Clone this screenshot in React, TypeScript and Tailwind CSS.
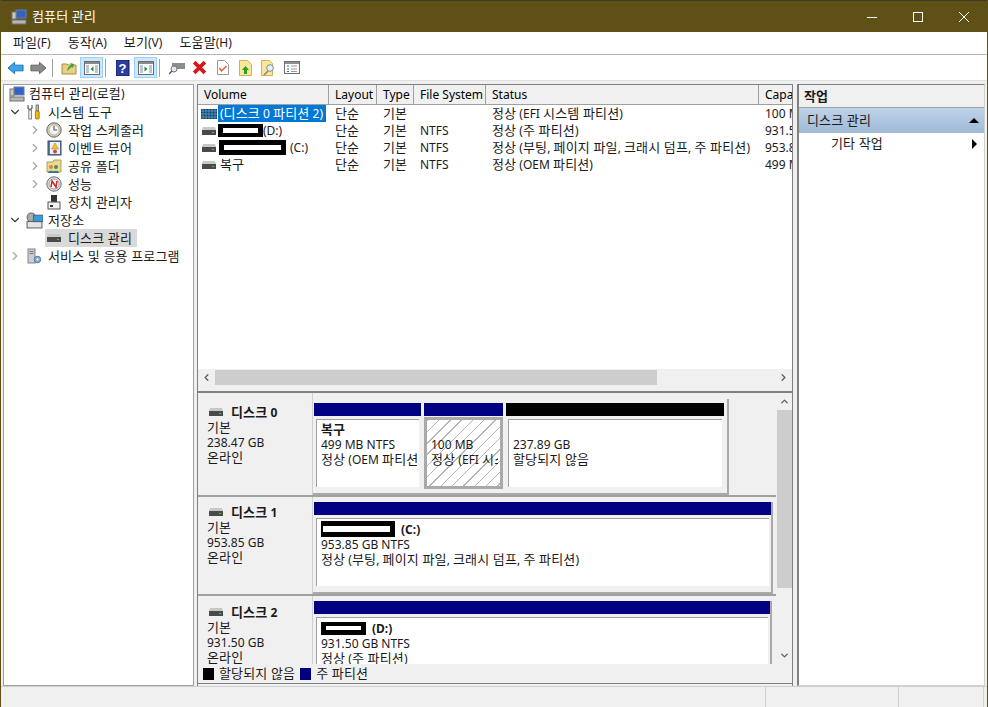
import type { ReactNode } from 'react'
import { ChevronDown, ChevronLeft, ChevronRight, ChevronUp } from 'lucide-react'

const font = 'font-["Noto_Sans","Noto_Sans_CJK_KR",sans-serif]'

// hangul runs a px larger than latin, the screenshot's font pairs them that way
function T({ children }: { children: string }) {
  const parts = children.split(/([가-힣]+(?: [가-힣]+)*)/)
  return (
    <>
      {parts.map((p, i) => (i % 2 === 1 ? <span key={i} className="text-[13px] tracking-[0.15px]">{p}</span> : p))}
    </>
  )
}

function DriveIcon({ className = '' }: { className?: string }) {
  return (
    <svg viewBox="0 0 16 10" className={`w-[16px] h-[10px] shrink-0 ${className}`}>
      <path d="M2 1h12l1 3H1z" fill="#c8c8c8" />
      <rect x="1" y="4" width="14" height="5" fill="#4a4a4a" />
      <rect x="11" y="6" width="2" height="1" fill="#35d04a" />
    </svg>
  )
}

function Redacted({ w, h = 16, inner = 6, className = '' }: { w: number; h?: number; inner?: number; className?: string }) {
  return (
    <span style={{ width: w, height: h }} className={`inline-flex items-center px-[5px] bg-black shrink-0 ${className}`}>
      <span style={{ height: inner }} className="w-full bg-white" />
    </span>
  )
}

function ToolBtn({ children, active = false, className = '' }: { children: ReactNode; active?: boolean; className?: string }) {
  return (
    <div className={`w-[23px] h-[21px] flex items-center justify-center shrink-0 border ${active ? 'bg-[#cce8ff] border-[#99d1ff]' : 'border-transparent'} ${className}`}>
      {children}
    </div>
  )
}

const Sep = () => <div className="w-px h-[18px] bg-[#a0a0a0] mx-[2px] shrink-0" />

function PaneIcon({ dir }: { dir: 'left' | 'right' }) {
  return (
    <svg viewBox="0 0 16 14" className="w-[16px] h-[14px]">
      <rect x="0.5" y="0.5" width="15" height="13" fill="#fff" stroke="#6b6b6b" />
      <rect x="1" y="1" width="14" height="2" fill="#8a8a8a" />
      <path d="M2 5h3M2 7h3M2 9h3M2 11h3M11 5h3M11 7h3M11 9h3M11 11h3" stroke="#7b8fa5" />
      {dir === 'left' ? <path d="M9.5 5.5v5l-3-2.5z" fill="#1a8f3c" /> : <path d="M6.5 5.5v5l3-2.5z" fill="#1a8f3c" />}
    </svg>
  )
}

function Toolbar() {
  return (
    <div className="h-[26px] flex items-center pl-[3px] bg-white border-b border-[#e0e0e0]">
      <ToolBtn className="w-[21px]">
        <svg viewBox="0 0 18 14" className="w-[17px] h-[14px]"><path d="M1 7l7-6v3h9v6H8v3z" fill="#3fa4ea" stroke="#1c6fb5" /></svg>
      </ToolBtn>
      <ToolBtn className="w-[23px]">
        <svg viewBox="0 0 18 14" className="w-[17px] h-[14px]"><path d="M17 7l-7-6v3H1v6h9v3z" fill="#8a8a8a" stroke="#5f5f5f" /></svg>
      </ToolBtn>
      <Sep />
      <ToolBtn className="ml-[2px]">
        <svg viewBox="0 0 16 14" className="w-[16px] h-[14px]">
          <path d="M1 3h5l1 1h8v9H1z" fill="#e8cf86" stroke="#a88f45" />
          <path d="M6 10c0-3 2-5 4-6l-1-2 4 1-1 4-1-1c-2 1-3 2-5 4z" fill="#3aa63a" />
        </svg>
      </ToolBtn>
      <ToolBtn active><PaneIcon dir="left" /></ToolBtn>
      <Sep />
      <ToolBtn className="ml-[3px]">
        <svg viewBox="0 0 14 16" className="w-[14px] h-[16px]"><rect width="13" height="16" fill="#2b3f9e" stroke="#15205e" /><text x="6.5" y="13" textAnchor="middle" fontSize="13" fontWeight="700" fill="#fff" fontFamily="Liberation Sans">?</text></svg>
      </ToolBtn>
      <ToolBtn active><PaneIcon dir="right" /></ToolBtn>
      <Sep />
      <ToolBtn className="ml-[3px]">
        <svg viewBox="0 0 16 14" className="w-[16px] h-[14px]">
          <rect x="3" y="2" width="13" height="6" fill="#8c8c8c" />
          <rect x="12" y="4" width="2" height="1" fill="#35d04a" />
          <circle cx="5" cy="8" r="3" fill="#dfe9f2" stroke="#777" />
          <path d="M3 10l-3 3" stroke="#555" strokeWidth="1.5" />
        </svg>
      </ToolBtn>
      <ToolBtn>
        <svg viewBox="0 0 14 14" className="w-[15px] h-[15px]"><path d="M2 2l10 10M12 2L2 12" stroke="#d9141b" strokeWidth="3.4" /></svg>
      </ToolBtn>
      <ToolBtn>
        <svg viewBox="0 0 12 15" className="w-[12px] h-[15px]">
          <path d="M.5.5h7l4 4v10H.5z" fill="#fff" stroke="#9a9a9a" />
          <path d="M2.5 8l2 3 5-5" fill="none" stroke="#e0562a" strokeWidth="1.4" />
        </svg>
      </ToolBtn>
      <ToolBtn>
        <svg viewBox="0 0 13 16" className="w-[13px] h-[16px]">
          <path d="M.5.5h8l4 4v11H.5z" fill="#fbe596" stroke="#cdb35a" />
          <path d="M6.5 6l3.5 4H8v4H5v-4H3z" fill="#25a02c" />
        </svg>
      </ToolBtn>
      <ToolBtn>
        <svg viewBox="0 0 15 16" className="w-[15px] h-[16px]">
          <path d="M.5.5h8l3 3v12H.5z" fill="#fbe596" stroke="#cdb35a" />
          <circle cx="9" cy="8" r="3.3" fill="#e6f1fa" stroke="#7e8c98" />
          <path d="M7 11l-4 4" stroke="#7e8c98" strokeWidth="1.6" />
        </svg>
      </ToolBtn>
      <ToolBtn>
        <svg viewBox="0 0 16 13" className="w-[16px] h-[13px]">
          <rect x="0.5" y="0.5" width="15" height="12" fill="#fff" stroke="#6e6e6e" />
          <rect x="1" y="1" width="14" height="2" fill="#8f8f8f" />
          <path d="M3 5h2M3 8h2M3 10.5h2" stroke="#2d6fc4" strokeWidth="1.2" />
          <path d="M7 5h6M7 8h6M7 10.5h6" stroke="#9a9a9a" />
        </svg>
      </ToolBtn>
    </div>
  )
}

function TreeIcon({ kind }: { kind: string }) {
  if (kind === 'computer') {
    return (
      <svg viewBox="0 0 16 16" className="w-[16px] h-[16px]">
        <rect x="5" y="1" width="10" height="8" fill="#2f63c8" stroke="#6f7f99" />
        <rect x="1" y="3" width="4" height="7" fill="#c7c7c7" stroke="#777" />
        <rect x="1" y="11" width="14" height="4" fill="#b8b8b8" stroke="#6f6f6f" />
      </svg>
    )
  }
  if (kind === 'tools') {
    return (
      <svg viewBox="0 0 16 16" className="w-[16px] h-[16px]">
        <path d="M2 1v3l2 2 2-2V1" fill="none" stroke="#666" strokeWidth="1.3" />
        <rect x="2.8" y="6" width="2.6" height="9" fill="#eee" stroke="#666" strokeWidth=".8" />
        <rect x="10" y="1" width="2.6" height="6" fill="#bdbdbd" stroke="#666" strokeWidth=".8" />
        <rect x="9.4" y="7" width="3.8" height="8" rx="1" fill="#eeb914" stroke="#8f6a08" strokeWidth=".8" />
      </svg>
    )
  }
  if (kind === 'clock') {
    return (
      <svg viewBox="0 0 16 16" className="w-[16px] h-[16px]">
        <circle cx="8" cy="8" r="7.2" fill="#d8cfb0" stroke="#666" />
        <circle cx="8" cy="8" r="5" fill="#f5f6f8" stroke="#9a9a9a" strokeWidth=".6" />
        <path d="M8 4v4h3" fill="none" stroke="#555" strokeWidth="1.1" />
      </svg>
    )
  }
  if (kind === 'event') {
    return (
      <svg viewBox="0 0 16 16" className="w-[16px] h-[16px]">
        <rect x="2" y="1" width="13" height="14" fill="#5d79a8" stroke="#364a70" />
        <rect x="4" y="2" width="10" height="12" fill="#eef0f4" />
        <path d="M9 3l3.5 6h-7z" fill="#f0c325" stroke="#a5821a" strokeWidth=".5" />
        <circle cx="9" cy="11.5" r="2" fill="#c8494a" />
      </svg>
    )
  }
  if (kind === 'share') {
    return (
      <svg viewBox="0 0 16 16" className="w-[16px] h-[16px]">
        <path d="M1 4h6l1-2h7v12H1z" fill="#ecd992" stroke="#b39d52" />
        <circle cx="5" cy="9" r="2" fill="#d18a4a" />
        <circle cx="10" cy="9" r="2" fill="#4c8f4f" />
        <path d="M2 15c0-3 6-3 6 0zM7 15c0-3 6-3 6 0z" fill="#3b6f9e" />
      </svg>
    )
  }
  if (kind === 'perf') {
    return (
      <svg viewBox="0 0 16 16" className="w-[16px] h-[16px]">
        <circle cx="8" cy="8" r="7.2" fill="#ddd" stroke="#6f6f6f" />
        <circle cx="8" cy="8" r="5" fill="#fff" stroke="#555" strokeWidth=".5" />
        <path d="M5 11l1-6 4 6 1-6" fill="none" stroke="#d01f26" strokeWidth="1.5" />
      </svg>
    )
  }
  if (kind === 'device') {
    return (
      <svg viewBox="0 0 16 16" className="w-[16px] h-[16px]">
        <rect x="5" y="1" width="6" height="7" fill="#333" />
        <rect x="2" y="8" width="12" height="7" fill="#f0f0f0" stroke="#555" />
        <rect x="4" y="11" width="3" height="2" fill="#333" />
      </svg>
    )
  }
  if (kind === 'storage') {
    return (
      <svg viewBox="0 0 16 16" className="w-[17px] h-[17px]">
        <rect x="1" y="9" width="14" height="6" fill="#e5e5e5" stroke="#666" />
        <circle cx="5" cy="5" r="4" fill="#a6b0a0" stroke="#666" />
        <rect x="7" y="3" width="9" height="6" fill="#3b9bd4" stroke="#476a86" />
      </svg>
    )
  }
  if (kind === 'disk') return <DriveIcon />
  return (
    <svg viewBox="0 0 16 16" className="w-[16px] h-[16px]">
      <rect x="2" y="1" width="7" height="14" fill="#c9ced4" stroke="#7d858d" />
      <path d="M3.5 3.5h4M3.5 5.5h4" stroke="#6f7880" />
      <circle cx="11.5" cy="11.5" r="3.2" fill="#8fb0d0" stroke="#4f7292" />
      <circle cx="11.5" cy="11.5" r="1" fill="#fff" />
    </svg>
  )
}

function TreeRow({ depth, label, icon, arrow, selected }: { depth: number; label: string; icon: string; arrow?: 'open' | 'closed'; selected?: boolean }) {
  const pad = depth === 0 ? 'pl-[3px]' : 'pl-[23px]'
  return (
    <div className={`h-[18px] flex items-center ${pad}`}>
      <span className="w-[16px] flex justify-center shrink-0">
        {arrow === 'open' && <ChevronDown className="w-[14px] h-[14px] text-[#404040]" strokeWidth={2} />}
        {arrow === 'closed' && <ChevronRight className="w-[14px] h-[14px] text-[#a6a6a6]" strokeWidth={2} />}
      </span>
      <div className={`ml-[2px] flex items-center h-[18px] pr-[5px] ${selected ? 'bg-[#d9d9d9]' : ''}`}>
        <span className="w-[18px] flex justify-center shrink-0"><TreeIcon kind={icon} /></span>
        <span className="ml-[5px] leading-[18px] whitespace-nowrap"><T>{label}</T></span>
      </div>
    </div>
  )
}

function Tree() {
  return (
    <div className="w-[191px] shrink-0 bg-white border border-[#a0a0a0] text-[12px] text-[#1a1a1a]">
      <div className="h-[18px] flex items-center pl-[5px]">
        <TreeIcon kind="computer" />
        <span className="ml-[4px] whitespace-nowrap"><T>컴퓨터 관리(로컬)</T></span>
      </div>
      <TreeRow depth={0} label="시스템 도구" icon="tools" arrow="open" />
      <TreeRow depth={1} label="작업 스케줄러" icon="clock" arrow="closed" />
      <TreeRow depth={1} label="이벤트 뷰어" icon="event" arrow="closed" />
      <TreeRow depth={1} label="공유 폴더" icon="share" arrow="closed" />
      <TreeRow depth={1} label="성능" icon="perf" arrow="closed" />
      <TreeRow depth={1} label="장치 관리자" icon="device" />
      <TreeRow depth={0} label="저장소" icon="storage" arrow="open" />
      <TreeRow depth={1} label="디스크 관리" icon="disk" selected />
      <TreeRow depth={0} label="서비스 및 응용 프로그램" icon="service" arrow="closed" />
    </div>
  )
}

const colWidths = ['w-[131px]', 'w-[48px]', 'w-[37px]', 'w-[72px]', 'w-[273px]', 'w-[34px]']

function HeaderCell({ label, i }: { label: string; i: number }) {
  return (
    <div className={`${colWidths[i]} shrink-0 h-[20px] leading-[19px] pl-[6px] bg-[#f0f0f0] border-r border-b border-[#a0a0a0] overflow-hidden whitespace-nowrap`}>
      {label}
    </div>
  )
}

function Cell({ i, children }: { i: number; children?: ReactNode }) {
  return <div className={`${colWidths[i]} shrink-0 pl-[6px] overflow-hidden whitespace-nowrap`}>{children}</div>
}

function VolRow({ vol, icon, fs, status, cap }: { vol: ReactNode; icon?: boolean; fs?: string; status: string; cap: string }) {
  return (
    <div className="h-[17px] leading-[17px] flex text-[#1a1a1a]">
      <div className="w-[131px] shrink-0 flex items-center pl-[3px] overflow-hidden whitespace-nowrap">
        {icon ? (
          <svg viewBox="0 0 16 10" className="w-[16px] h-[10px] shrink-0">
            <rect width="16" height="10" fill="#123f66" />
            <path d="M0 2h16M0 5h16M0 8h16M2 0v10M5 0v10M8 0v10M11 0v10M14 0v10" stroke="#6fa9d6" strokeWidth=".7" />
          </svg>
        ) : (
          <DriveIcon />
        )}
        {vol}
      </div>
      <Cell i={1}><T>단순</T></Cell>
      <Cell i={2}><T>기본</T></Cell>
      <Cell i={3}>{fs}</Cell>
      <Cell i={4}><T>{status}</T></Cell>
      <Cell i={5}>{cap}</Cell>
    </div>
  )
}

function VolumeList() {
  return (
    <div className="h-[284px] shrink-0 bg-white flex flex-col overflow-hidden text-[12px]">
      <div className="flex">
        {['Volume', 'Layout', 'Type', 'File System', 'Status', 'Capa'].map((c, i) => (
          <HeaderCell key={c} label={c} i={i} />
        ))}
      </div>
      <VolRow
        icon
        vol={<span className="ml-[1px] pl-[2px] pr-[3px] bg-[#0078d7] text-white h-[17px]"><T>(디스크 0 파티션 2)</T></span>}
        status="정상 (EFI 시스템 파티션)"
        cap="100 MB"
      />
      <VolRow vol={<><Redacted w={45} h={13} inner={5} className="ml-px" /><span>(D:)</span></>} fs="NTFS" status="정상 (주 파티션)" cap="931.50 GB" />
      <VolRow vol={<><Redacted w={67} h={15} inner={5} className="ml-[2px]" /><span className="ml-[4px]">(C:)</span></>} fs="NTFS" status="정상 (부팅, 페이지 파일, 크래시 덤프, 주 파티션)" cap="953.85 GB" />
      <VolRow vol={<span className="ml-[3px]"><T>복구</T></span>} fs="NTFS" status="정상 (OEM 파티션)" cap="499 MB" />
    </div>
  )
}

function HScroll() {
  return (
    <div className="h-[16px] shrink-0 flex items-center bg-[#f0f0f0]">
      <div className="w-[17px] flex justify-center"><ChevronLeft className="w-[11px] h-[11px] text-[#606060]" strokeWidth={3} /></div>
      <div className="w-[442px] h-[15px] bg-[#cdcdcd]" />
      <div className="flex-1" />
      <div className="w-[17px] flex justify-center"><ChevronRight className="w-[11px] h-[11px] text-[#606060]" strokeWidth={3} /></div>
    </div>
  )
}

function Partition({ w, bar, selected, hatched, children }: { w: string; bar: string; selected?: boolean; hatched?: boolean; children?: ReactNode }) {
  return (
    <div className={`${w} shrink-0 flex flex-col`}>
      <div className={`h-[13px] shrink-0 ${bar}`} />
      <div className={`flex-1 mt-[1px] min-h-0 ${selected ? 'border-[3px] border-[#a9a9a9]' : 'p-[2px] bg-[#f0f0f0]'}`}>
        <div
          className={`h-full pl-[4px] pt-[2px] leading-[15px] text-[12px] text-[#1a1a1a] ${
            hatched
              ? 'bg-[repeating-linear-gradient(135deg,#b4b4b4_0px,#b4b4b4_1px,#ffffff_1px,#ffffff_8px)]'
              : 'bg-white border-t border-l border-[#a0a0a0]'
          }`}
        >
          <div className="h-full mr-[2px] overflow-hidden whitespace-nowrap">{children}</div>
        </div>
      </div>
    </div>
  )
}

function DiskLabel({ name, num, size, top }: { name: string; num: string; size: string; top: string }) {
  return (
    <div className={`w-[115px] shrink-0 pl-[9px] ${top} border-r border-[#d0d0d0] text-[12px] leading-[15px] text-[#1a1a1a]`}>
      <div className="flex items-center h-[16px] pl-[1px]">
        <DriveIcon />
        <span className="ml-[7px] font-bold"><T>{name}</T> {num}</span>
      </div>
      <div><T>기본</T></div>
      <div>{size}</div>
      <div><T>온라인</T></div>
    </div>
  )
}

function DiskPane() {
  return (
    <div className="flex-1 min-h-0 flex overflow-hidden bg-[#f0f0f0]">
      <div className="w-[578px] shrink-0 flex flex-col overflow-hidden">
        <div className="h-[104px] shrink-0 flex border-b-2 border-[#a0a0a0]">
          <DiskLabel name="디스크" num="0" size="238.47 GB" top="pt-[11px]" />
          <div className="flex-1 pt-[6px]">
            <div className="w-[416px] h-[96px] flex gap-[3px] pl-px pr-[4px] pt-[4px] pb-[4px] border-r-2 border-b-2 border-[#a9a9a9]">
              <Partition w="w-[107px]" bar="bg-[#000080]">
                <div className="font-bold"><T>복구</T></div>
                <div>499 MB NTFS</div>
                <div><T>정상 (OEM 파티션)</T></div>
              </Partition>
              <Partition w="w-[79px]" bar="bg-[#000080]" selected hatched>
                <div className="h-[15px]" />
                <div>100 MB</div>
                <div><T>정상 (EFI 시스템 파티션)</T></div>
              </Partition>
              <Partition w="w-[218px]" bar="bg-black">
                <div className="h-[15px]" />
                <div>237.89 GB</div>
                <div><T>할당되지 않음</T></div>
              </Partition>
            </div>
          </div>
        </div>
        <div className="h-[99px] shrink-0 flex border-b-2 border-[#a0a0a0]">
          <DiskLabel name="디스크" num="1" size="953.85 GB" top="pt-[7px]" />
          <div className="flex-1 pt-[5px]">
            <div className="w-[460px] h-[92px] flex pl-px pr-[2px] pb-[4px] border-r-2 border-b-2 border-[#a9a9a9]">
              <Partition w="w-[457px]" bar="bg-[#000080]">
                <div className="flex items-center h-[16px] font-bold -ml-[3px]">
                  <Redacted w={77} h={16} inner={6} />
                  <span className="ml-[6px]">(C:)</span>
                </div>
                <div>953.85 GB NTFS</div>
                <div><T>정상 (부팅, 페이지 파일, 크래시 덤프, 주 파티션)</T></div>
              </Partition>
            </div>
          </div>
        </div>
        <div className="flex-1 min-h-0 flex">
          <DiskLabel name="디스크" num="2" size="931.50 GB" top="pt-[8px]" />
          <div className="flex-1 pt-[5px] min-h-0">
            <div className="w-[459px] h-[92px] flex pl-px pr-[2px] border-r-2 border-[#a9a9a9]">
              <Partition w="w-[456px]" bar="bg-[#000080]">
                <div className="flex items-center h-[16px] font-bold">
                  <Redacted w={45} h={13} inner={4} />
                  <span className="ml-[6px]">(D:)</span>
                </div>
                <div>931.50 GB NTFS</div>
                <div><T>정상 (주 파티션)</T></div>
              </Partition>
            </div>
          </div>
        </div>
      </div>
      <div className="flex-1" />
      <div className="w-[15px] shrink-0 flex flex-col items-center bg-[#f0f0f0]">
        <div className="h-[17px] flex items-center"><ChevronUp className="w-[11px] h-[11px] text-[#606060]" strokeWidth={3} /></div>
        <div className="w-full h-[178px] bg-[#cdcdcd]" />
        <div className="flex-1" />
        <div className="h-[17px] flex items-center"><ChevronDown className="w-[11px] h-[11px] text-[#606060]" strokeWidth={3} /></div>
      </div>
    </div>
  )
}

function Legend() {
  return (
    <div className="h-[20px] shrink-0 flex items-center pl-[5px] bg-[#f0f0f0] border-b border-[#808080] text-[12px] text-[#1a1a1a]">
      <span className="w-[11px] h-[12px] bg-black" />
      <span className="ml-[5px]"><T>할당되지 않음</T></span>
      <span className="ml-[5px] w-[11px] h-[12px] bg-[#000080]" />
      <span className="ml-[5px]"><T>주 파티션</T></span>
    </div>
  )
}

function Center() {
  return (
    <div className="w-[596px] shrink-0 flex flex-col pb-[2px] border-t border-l border-r border-[#808080]">
      <VolumeList />
      <HScroll />
      <div className="h-[8px] shrink-0 bg-[#f0f0f0] border-b-2 border-[#808080]" />
      <DiskPane />
      <Legend />
    </div>
  )
}

function ActionPane() {
  return (
    <div className="w-[188px] shrink-0 ml-[4px] flex flex-col bg-white border-t border-t-[#808080] border-l-2 border-l-[#808080] border-r border-r-[#d0d0d0] border-b border-b-[#d0d0d0] text-[12px] text-[#1a1a1a]">
      <div className="h-[23px] shrink-0 leading-[22px] pl-[5px] font-bold bg-[#f0f0f0] border-b border-[#a0a0a0]"><T>작업</T></div>
      <div className="h-[25px] shrink-0 flex items-center pl-[8px] pr-[5px] bg-gradient-to-b from-[#bdd3e9] to-[#9fb9d6]">
        <span className="flex-1"><T>디스크 관리</T></span>
        <span className="w-0 h-0 border-x-[5px] border-x-transparent border-b-[5px] border-b-black" />
      </div>
      <div className="h-[22px] shrink-0 flex items-center pl-[32px] pr-[7px]">
        <span className="flex-1"><T>기타 작업</T></span>
        <span className="w-0 h-0 border-y-[5px] border-y-transparent border-l-[5px] border-l-black" />
      </div>
    </div>
  )
}

export default function App() {
  return (
    <div className={`w-[988px] h-[707px] flex flex-col overflow-hidden bg-[#f0f0f0] border-x border-[#5f5016] ${font}`}>
      <div className="h-[32px] shrink-0 flex items-center bg-[#5f5016] border-t border-[#3a3a2a] text-white text-[12px]">
        <div className="ml-[10px]"><TreeIcon kind="computer" /></div>
        <span className="ml-[5px] flex-1"><T>컴퓨터 관리</T></span>
        <div className="w-[46px] flex justify-center">
          <svg viewBox="0 0 10 10" className="w-[10px] h-[10px]"><path d="M0 5.5h10" stroke="#fff" /></svg>
        </div>
        <div className="w-[46px] flex justify-center">
          <svg viewBox="0 0 10 10" className="w-[10px] h-[10px]"><rect x=".5" y=".5" width="9" height="9" fill="none" stroke="#fff" /></svg>
        </div>
        <div className="w-[46px] flex justify-center">
          <svg viewBox="0 0 10 10" className="w-[10px] h-[10px]"><path d="M0 0l10 10M10 0L0 10" stroke="#fff" /></svg>
        </div>
      </div>
      <div className="h-[23px] shrink-0 flex items-center gap-[17px] pl-[12px] bg-white border-b border-[#b5b5b5] text-[12px] text-[#1a1a1a]">
        <span><T>파일(F)</T></span>
        <span><T>동작(A)</T></span>
        <span><T>보기(V)</T></span>
        <span><T>도움말(H)</T></span>
      </div>
      <Toolbar />
      <div className="h-[3px] shrink-0 bg-[#f0f0f0]" />
      <div className="h-[602px] shrink-0 flex pl-[2px]">
        <Tree />
        <div className="w-[3px] shrink-0" />
        <Center />
        <ActionPane />
      </div>
      <div className="flex-1 flex border-t border-[#d0d0d0]">
        <div className="w-[765px] border-r border-[#d0d0d0]" />
        <div className="w-[133px] border-r border-[#d0d0d0]" />
        <div className="w-[85px] border-r border-[#d0d0d0]" />
      </div>
    </div>
  )
}
